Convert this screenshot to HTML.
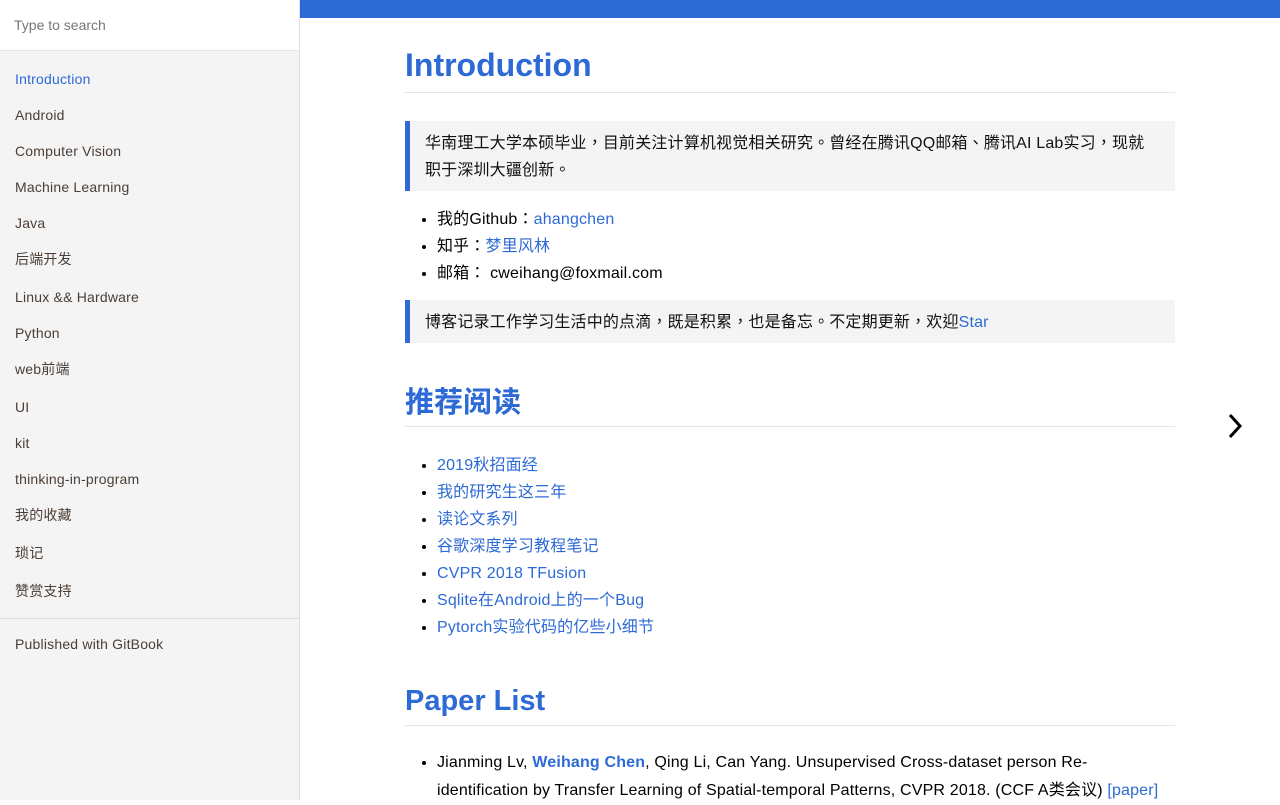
<!DOCTYPE html>
<html><head><meta charset="utf-8"><style>
*{margin:0;padding:0;box-sizing:border-box}
html,body{width:1280px;height:800px;overflow:hidden}
body{background:#fff;font-family:"Liberation Sans","Noto Sans CJK TC",sans-serif;color:#000}
.side{position:absolute;left:0;top:0;width:300px;height:800px;background:#f4f4f4;border-right:1px solid #e0e0e0}
.search{height:51px;background:#fff;border-bottom:1px solid #e5e5e5;padding:17px 14px;font-size:14px;color:#777}
.side a{position:absolute;left:15px;font-size:14px;color:#4a3e36;line-height:20px;letter-spacing:.2px}
.side a.act{color:#2d6ad6}
.sep{position:absolute;left:0;top:618px;width:299px;border-top:1px solid #ddd}
.bar{position:absolute;left:300px;top:0;width:980px;height:18px;background:#2d6ad6}
.main{position:absolute;left:405px;top:0;width:770px;font-size:16px;line-height:27px;letter-spacing:.17px}
h1,h2{position:absolute;left:0;width:770px;color:#2d6ad6;font-weight:bold;border-bottom:1px solid #e5e5e5;letter-spacing:0}
h1{font-size:32px;top:44px;height:49px;line-height:42px}
h2{font-size:29px;line-height:38px}
.q{position:absolute;left:0;width:770px;background:#f4f4f4;border-left:5px solid #2d6ad6;padding:9px 20px 7px 15px;color:#111}
ul{position:absolute;left:32px;width:738px;list-style:disc}
a{color:#2d6ad6;text-decoration:none}
.arrow{position:absolute;left:1222px;top:412px}
</style></head><body>
<div class="side">
<div class="search">Type to search</div>
<a class="act" style="top:69px">Introduction</a>
<a style="top:105px">Android</a>
<a style="top:141px">Computer Vision</a>
<a style="top:177px">Machine Learning</a>
<a style="top:213px">Java</a>
<a style="top:249px">后端开发</a>
<a style="top:287px">Linux &amp;&amp; Hardware</a>
<a style="top:323px">Python</a>
<a style="top:359px">web前端</a>
<a style="top:397px">UI</a>
<a style="top:433px">kit</a>
<a style="top:469px">thinking-in-program</a>
<a style="top:505px">我的收藏</a>
<a style="top:543px">琐记</a>
<a style="top:581px">赞赏支持</a>
<div class="sep"></div>
<a style="top:634px">Published with GitBook</a>
</div>
<div class="bar"></div>
<div class="main">
<h1>Introduction</h1>
<div class="q" style="top:121px;height:70px">华南理工大学本硕毕业，目前关注计算机视觉相关研究。曾经在腾讯QQ邮箱、腾讯AI Lab实习，现就职于深圳大疆创新。</div>
<ul style="top:206px">
<li>我的Github：<a>ahangchen</a></li>
<li>知乎：<a>梦里风林</a></li>
<li>邮箱： cweihang@foxmail.com</li>
</ul>
<div class="q" style="top:300px;height:43px">博客记录工作学习生活中的点滴，既是积累，也是备忘。不定期更新，欢迎<a>Star</a></div>
<h2 style="top:384px;height:43px">推荐阅读</h2>
<ul style="top:452px">
<li><a>2019秋招面经</a></li>
<li><a>我的研究生这三年</a></li>
<li><a>读论文系列</a></li>
<li><a>谷歌深度学习教程笔记</a></li>
<li><a>CVPR 2018 TFusion</a></li>
<li><a>Sqlite在Android上的一个Bug</a></li>
<li><a>Pytorch实验代码的亿些小细节</a></li>
</ul>
<h2 style="top:682px;height:44px">Paper List</h2>
<ul style="top:749px;line-height:28px;white-space:nowrap">
<li>Jianming Lv, <a><b>Weihang Chen</b></a>, Qing Li, Can Yang. Unsupervised Cross-dataset person Re-<br>identification by Transfer Learning of Spatial-temporal Patterns, CVPR 2018. (CCF A类会议) <a>[paper]</a></li>
</ul>
</div>
<svg class="arrow" width="26" height="28" viewBox="0 0 26 28"><path d="M8 3 L18 14 L8 25" fill="none" stroke="#000" stroke-width="3"/></svg>
</body></html>
